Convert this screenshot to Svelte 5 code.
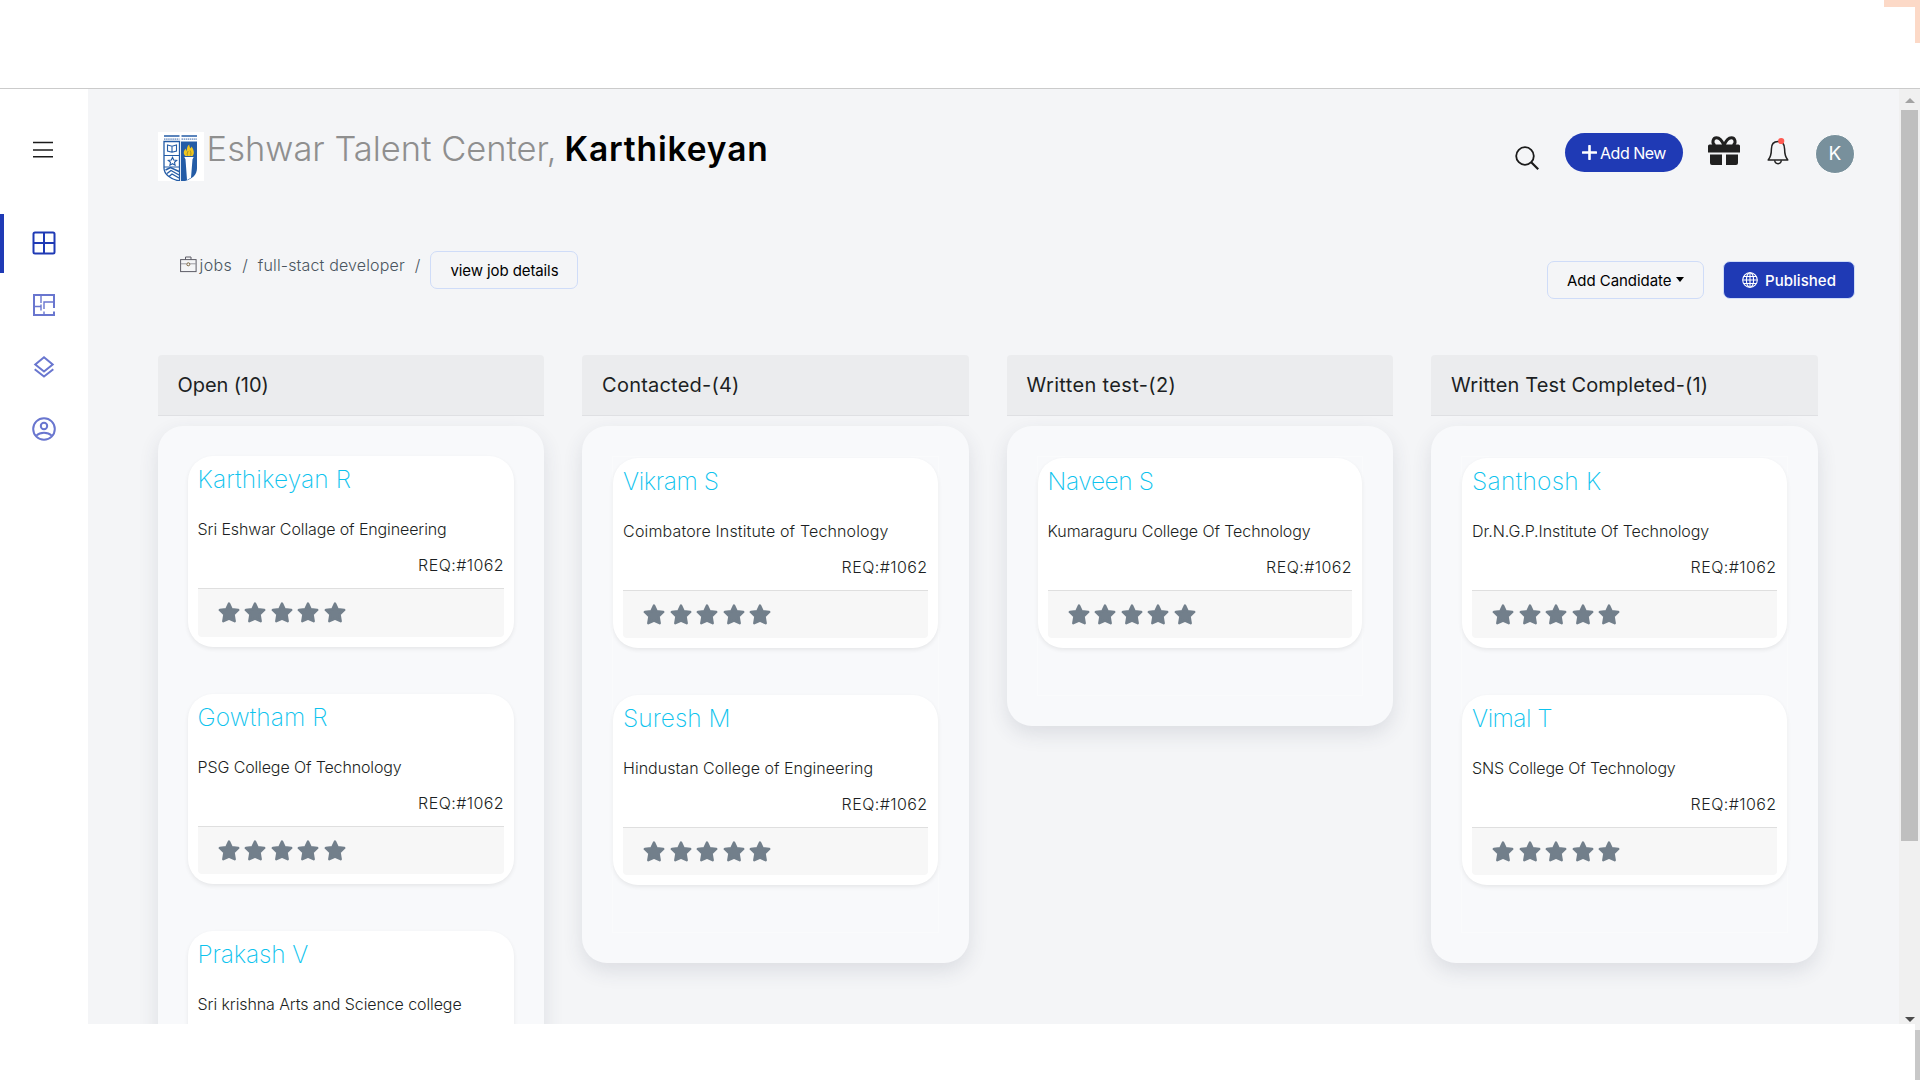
<script>
  // Spreads a label's tracking so that it fills the given width in pixels.
  function fit(node, width) {
    const natural = node.getBoundingClientRect().width;
    const count = node.textContent.length;
    node.style.letterSpacing = `${(width - natural) / count}px`;
  }

  const columns = [
    {
      title: 'Open (10)', width: 91, bordered: false,
      cards: [
        { name: 'Karthikeyan R', nameWidth: 153.5, college: 'Sri Eshwar Collage of Engineering', collegeWidth: 249, req: 'REQ:#1062' },
        { name: 'Gowtham R', nameWidth: 130, college: 'PSG College Of Technology', collegeWidth: 204, req: 'REQ:#1062' },
        { name: 'Prakash V', nameWidth: 110.5, college: 'Sri krishna Arts and Science college', collegeWidth: 264 }
      ]
    },
    {
      title: 'Contacted-(4)', width: 137.5, bordered: true,
      cards: [
        { name: 'Vikram S', nameWidth: 95.5, college: 'Coimbatore Institute of Technology', collegeWidth: 265.5, req: 'REQ:#1062' },
        { name: 'Suresh M', nameWidth: 107.5, college: 'Hindustan College of Engineering', collegeWidth: 250, req: 'REQ:#1062' }
      ]
    },
    {
      title: 'Written test-(2)', width: 149.5, bordered: true,
      cards: [
        { name: 'Naveen S', nameWidth: 106, college: 'Kumaraguru College Of Technology', collegeWidth: 263, req: 'REQ:#1062' }
      ]
    },
    {
      title: 'Written Test Completed-(1)', width: 257, bordered: true,
      cards: [
        { name: 'Santhosh K', nameWidth: 129.5, college: 'Dr.N.G.P.Institute Of Technology', collegeWidth: 237, req: 'REQ:#1062' },
        { name: 'Vimal T', nameWidth: 80, college: 'SNS College Of Technology', collegeWidth: 203.5, req: 'REQ:#1062' }
      ]
    }
  ];
  const stars = [1, 2, 3, 4, 5];
</script>

<div class="page">
  <div class="top"><i class="corner"></i></div>

  <div class="body">
    <nav>
      <button class="menu" aria-label="Menu">
        <svg width="20" height="18" viewBox="0 0 20 18"><path d="M0 1.500h20M0 9h20M0 15.700h20" stroke="#1b1b1b" stroke-width="1.400" /></svg>
      </button>
      <a class="item active" href="#board" aria-label="Board">
        <svg width="24" height="24" viewBox="0 0 24 24" fill="none" stroke="#1f3ab5" stroke-width="2"><rect x="1.500" y="1.500" width="21" height="21" rx="1.500" /><path d="M12 1.500v21M1.500 12h21" /></svg>
      </a>
      <a class="item" href="#plan" aria-label="Plan">
        <svg width="24" height="24" viewBox="0 0 24 24" fill="none" stroke="#6976cf"><path d="M22 15V2H2v20h20v-3.500" stroke-width="2" /><path d="M9 2v8M2 13.500h7v4M9 13.500v-2M12 22v-3.500M12 16V9h10" stroke-width="1.400" /></svg>
      </a>
      <a class="item" href="#layers" aria-label="Layers">
        <svg width="24" height="24" viewBox="0 0 24 24" fill="none" stroke="#6976cf" stroke-width="2"><path d="M12 2.300l8.700 7.200L12 16.500 3.300 9.500z" /><path d="M2.700 14.300L12 21.600l9.300-7.300" /></svg>
      </a>
      <a class="item" href="#profile" aria-label="Profile">
        <svg width="24" height="24" viewBox="0 0 24 24" fill="none" stroke="#6976cf" stroke-width="2"><circle cx="12" cy="12" r="10.800" /><circle cx="12" cy="9" r="3.200" /><path d="M4.300 18.600c4-3.900 11.400-3.900 15.400 0" /></svg>
      </a>
    </nav>

    <main>
      <header>
        <svg class="logo" width="46" height="49" viewBox="0 0 46 49">
          <rect width="46" height="49" fill="#fff" />
          <path d="M6 4h15.500M23.500 4H39" stroke="#245ca6" stroke-width="1.300" />
          <path d="M6 7.200h15.500M23.500 7.200H39" stroke="#8aa6cf" stroke-width="1.800" stroke-dasharray="1.500 .6" />
          <path d="M23 9.500h16V36c0 7-5 11-12 13h-4z" fill="#245ca6" />
          <path d="M6 9.500h15.500V49C12 47 6 42 6 36z" fill="#fff" stroke="#245ca6" stroke-width="1.300" />
          <path d="M6 23.500h15.500M6 35h15.500" stroke="#245ca6" stroke-width="1" />
          <path d="M9.500 13l4.500 1.300 4.500-1.300v6L14 20.300l-4.500-1.300zM14 14.300v6" fill="none" stroke="#245ca6" stroke-width="1.100" />
          <path d="M14.500 25.300l1.200 2.700 3 .3-2.200 2 .6 2.900-2.600-1.500-2.600 1.500.6-2.900-2.200-2 3-.3z" fill="none" stroke="#245ca6" stroke-width="1.100" />
          <path d="M7.500 38l5-2.500 8.500 4M9 41.500l4-3 8 4.500M11 44.500l3-2.500 7 4" fill="none" stroke="#245ca6" stroke-width="1.400" />
          <path d="M26.300 25h9.400l-1.200 2.200-1.500 18.500-4 2.200-1.500-20.700z" fill="#fff" />
          <path d="M27.500 24c-2.500-2-2.200-5 .3-7.500 0 1.200.4 2 1 2.300 0-3 .7-5 2.500-6.300 0 1.800.5 3 1.300 4l.9-2c2.500 3.500 3.300 7 1 9.500z" fill="#efc61f" />
          <path d="M29.500 23.500c-.8-2 .2-3 .6-4.500M32.500 23.500c.8-2 .3-3.300-.3-5" fill="none" stroke="#8b7d2b" stroke-width=".7" />
        </svg>
        <h1>
          <span class="org" use:fit={350}>Eshwar Talent Center,</span><span class="person" use:fit={204}>Karthikeyan</span>
        </h1>
        <div class="tools">
          <svg class="search" width="24" height="24" viewBox="0 0 24 24" fill="none" stroke="#1b1b1b" stroke-width="1.800"><circle cx="10" cy="10" r="8.800" /><path d="M16.200 16.200l7 7" stroke-width="2.200" /></svg>
          <button class="add">
            <svg width="15" height="15" viewBox="0 0 15 15"><path d="M7.500 1v13M1 7.500h13" stroke="#fff" stroke-width="2.600" stroke-linecap="round" /></svg>
            <span use:fit={66}>Add New</span>
          </button>
          <svg class="gift" width="32" height="29" viewBox="0 0 32 29">
            <path d="M1.500 8.500h29A1.500 1.500 0 0 1 32 10v6.500H0V10a1.500 1.500 0 0 1 1.500-1.500zM2 18.500h12V29H4a2 2 0 0 1-2-2zM18 18.500h12V27a2 2 0 0 1-2 2H18z" fill="#202020" />
            <path d="M16 9.500C13.500 3 10.800 1.700 8.600 1.700c-4 0-5 5.500-1.600 7.800M16 9.500c2.500-6.500 5.200-7.800 7.400-7.800 4 0 5 5.500 1.600 7.800" fill="none" stroke="#202020" stroke-width="3" />
          </svg>
          <svg class="bell" width="22" height="29" viewBox="0 0 22 29">
            <path d="M11 4.500c-4.500 0-6.600 3.300-6.600 7.500 0 5.500-.6 8-3.200 10.900h19.600c-2.600-2.900-3.200-5.400-3.200-10.900 0-4.200-2.100-7.500-6.600-7.500z" fill="none" stroke="#222" stroke-width="1.500" stroke-linejoin="round" />
            <path d="M7.700 23.300c.3 4.500 6.300 4.500 6.600 0" fill="none" stroke="#222" stroke-width="1.500" />
            <circle cx="14.200" cy="4" r="3.100" fill="#ff5a52" />
          </svg>
          <div class="avatar">K</div>
        </div>
      </header>

      <div class="subbar">
        <div class="crumbs">
          <svg width="17" height="17" viewBox="0 0 17 17" fill="none" stroke="#5d5d66"><rect x=".6" y="3.600" width="15.500" height="12" /><path d="M5.500 3.500V1h5.500v2.500" /><path d="M1 7.800h5.500M10 7.800h6" stroke="#9a9aa2" /><circle cx="8.300" cy="8.300" r="1.500" stroke="#7b6540" /></svg>
          <span class="jobs" use:fit={32.5}>jobs</span>
          <span class="slash">/</span>
          <span use:fit={147}>full-stact developer</span>
          <span class="slash">/</span>
        </div>
        <button class="outline view"><span use:fit={108}>view job details</span></button>
        <button class="outline candidate"><span use:fit={104.5}>Add Candidate</span><i class="caret"></i></button>
        <button class="published">
          <svg width="16" height="16" viewBox="0 0 16 16" fill="none" stroke="#fff" stroke-width="1.100"><circle cx="8" cy="8" r="7.300" /><ellipse cx="8" cy="8" rx="3.600" ry="7.300" /><path d="M8 .7v14.600M.7 8h14.600M1.700 4.500h12.600M1.700 11.500h12.600" /></svg>
          <span use:fit={71}>Published</span>
        </button>
      </div>

      <div class="board">
        {#each columns as column}
          <section>
            <h2><span use:fit={column.width}>{column.title}</span></h2>
            <div class="panel">
              <div class="list" class:bordered={column.bordered}>
                {#each column.cards as card}
                  <article>
                    <h3><span use:fit={card.nameWidth}>{card.name}</span></h3>
                    <p class="college"><span use:fit={card.collegeWidth}>{card.college}</span></p>
                    {#if card.req}
                      <p class="req"><span use:fit={86}>{card.req}</span></p>
                      <footer>
                        {#each stars as star (star)}
                          <svg width="22" height="21" viewBox="0 0 22 21"><path d="M11 1.600l2.700 5.600 6.500.8-4.600 4.500 1.100 6.700L11 16.700l-5.700 2.500 1.100-6.700L1.800 8l6.500-.8z" fill="#727f8b" stroke="#727f8b" stroke-width="2.400" stroke-linejoin="round" /></svg>
                        {/each}
                      </footer>
                    {/if}
                  </article>
                {/each}
              </div>
            </div>
          </section>
        {/each}
      </div>
    </main>

    <aside class="scroll">
      <i class="up"></i>
      <i class="thumb"></i>
      <i class="down"></i>
    </aside>
  </div>

  <div class="bottom"><i class="edge"></i></div>
</div>

<style>
  :global(body) { background: #fff; overflow: hidden; }
  .page {
    width: 1920px; height: 1080px; overflow: hidden; display: flex; flex-direction: column;
    font-family: Inter, "Liberation Sans", sans-serif; color: #1c1f23; background: #fff;
  }
  .page * { box-sizing: border-box; }
  button { font: inherit; border: 0; margin: 0; padding: 0; background: none; color: inherit; }
  svg { display: block; flex: none; }
  span { white-space: nowrap; }
  h1, h2, h3, p { margin: 0; }

  .top { height: 89px; flex: none; border-bottom: 1px solid #cbcbcb; display: flex; justify-content: flex-end; }
  .corner { width: 36px; height: 43px; border-top: 7px solid #fcd9c7; border-right: 5px solid #fcd9c7; }
  .body { height: 935px; flex: none; display: flex; overflow: hidden; }
  .bottom { flex: 1; display: flex; justify-content: flex-end; }
  .edge { width: 5px; background: #c8c8c8; border-top: 6px solid #f0f0f0; }

  nav { width: 88px; flex: none; display: flex; flex-direction: column; }
  .menu { padding: 52px 0 0 33px; height: 125px; display: flex; align-items: flex-start; }
  .item { height: 59px; margin-bottom: 3px; display: flex; align-items: center; padding: 0 0 2px 32px; }
  .item.active { border-left: 4px solid #1f3ab5; padding-left: 28px; }

  main { flex: 1; background: #f4f5f7; padding-left: 69.600px; min-width: 0; }
  header { height: 149px; padding-top: 43px; display: flex; align-items: flex-start; }
  h1 { display: flex; margin-left: 3px; line-height: 34px; font-size: 34.500px; font-weight: 300; }
  .org { color: #8f8f8f; }
  .person { color: #000; font-weight: 600; font-size: 33.500px; margin-left: 8px; }
  .tools { margin-left: auto; padding-right: 44px; display: flex; align-items: flex-start; }
  .search { margin: 14px 26px 0 0; }
  .add {
    margin: 1px 25px 0 0; width: 118px; height: 39px; border-radius: 20px; background: #1f3ab5; color: #fff;
    display: flex; align-items: center; padding-left: 17px; gap: 3px; font-size: 16px;
  }
  .gift { margin: 4px 27px 0 0; }
  .bell { margin: 5px 26px 0 0; }
  .avatar {
    width: 40px; height: 40px; border-radius: 50%; background: #78909c; border: 1.500px solid #fff; color: #fff;
    font-size: 19px; line-height: 37px; text-align: center; margin-top: 1.500px;
  }

  .subbar { height: 117px; display: flex; align-items: flex-start; padding: 13px 44px 0 22px; }
  .crumbs { display: flex; align-items: center; height: 24px; margin-top: 2px; color: #4a5560; font-size: 16px; font-weight: 300; }
  .crumbs svg { margin-top: -2px; }
  .jobs { margin-left: 3px; }
  .slash { width: 25.700px; text-align: center; }
  .outline { border: 1px solid #cfdcf8; border-radius: 7px; height: 38px; color: #000; font-size: 15px; display: flex; align-items: center; }
  .view { width: 148px; justify-content: center; }
  .candidate { margin: 10px 19px 0 auto; width: 157px; padding-left: 19px; }
  .caret { border: 4.500px solid transparent; border-top: 5px solid #000; border-bottom: 0; margin: -2px 0 0 4px; }
  .published {
    margin-top: 10px; width: 132px; height: 38px; border: 1px solid #cfdcf8; border-radius: 7px; background: #1f3ab5;
    color: #fff; font-size: 15px; font-weight: 500; display: flex; align-items: center; padding-left: 18px; gap: 7px;
  }

  .board { display: grid; grid-template-columns: repeat(4, 386.500px); gap: 38px; align-items: start; }
  h2 {
    height: 61px; background: #ebecee; border-bottom: 1px solid #dfe0e3; border-radius: 4px 4px 0 0;
    padding: 1px 20px 0; line-height: 59px; font-size: 20px; font-weight: 400;
  }
  .panel {
    margin-top: 10px; padding: 30px; border-radius: 25px; background: #f8f9fb;
    box-shadow: 0 8px 20px rgba(50, 60, 80, .12);
  }
  .bordered { border: 1px solid #fafbfc; padding-top: 1px; }
  article {
    height: 190.500px; margin-bottom: 47px; padding: 10px; border-radius: 25px; background: #fff;
    box-shadow: 0 2px 4px rgba(0, 0, 0, .075);
  }
  .bordered article { height: 190px; }
  h3 { line-height: 26px; font-size: 24.500px; font-weight: 200; color: #0dc3ee; }
  .college { margin-top: 25px; line-height: 24px; font-size: 16px; font-weight: 300; }
  .req { margin-top: 12px; line-height: 24px; font-size: 16px; font-weight: 300; text-align: right; }
  footer {
    margin-top: 11px; height: 48.500px; background: #f7f7f7; border-top: 1px solid #dfdfdf; border-radius: 0 0 4px 4px;
    padding: 0 0 0 20px; display: flex; align-items: center; gap: 4.600px;
  }
  .bordered footer { height: 48px; }

  .scroll { width: 21px; flex: none; background: #f0f0f0; display: flex; flex-direction: column; align-items: center; }
  .up { border: 5px solid transparent; border-bottom: 5px solid #a3a3a3; border-top: 0; margin: 9px 0 7px; }
  .thumb { width: 17px; height: 731px; background: #bfbfbf; }
  .down { border: 5px solid transparent; border-top: 5px solid #4b4b4b; border-bottom: 0; margin-top: auto; margin-bottom: 2px; }
</style>
